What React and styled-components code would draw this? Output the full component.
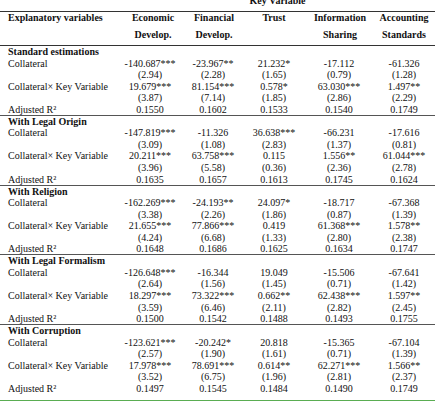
import React from "react";
import styled, { createGlobalStyle } from "styled-components";

const Global = createGlobalStyle`
  html, body { margin: 0; padding: 0; background: #fff; overflow: hidden; }
  body { font-family: "Liberation Serif", "Times New Roman", serif; color: #111; }
`;

const Page = styled.div`
  width: 435px;
  margin-top: -5.5px;
  font-size: 10px;
`;

const Row = styled.div`
  display: grid;
  grid-template-columns: 120px 60px 66px 56px 74px 59px;
  height: ${(p) => p.$h}px;
  line-height: 11.5px;
  box-sizing: border-box;
  border-top: ${(p) => (p.$top ? "1px solid #333" : "none")};
  border-bottom: ${(p) => (p.$bottom ? `1px solid ${p.$dark ? "#333" : "#555"}` : "none")};
  font-weight: ${(p) => (p.$bold ? "bold" : "normal")};
  white-space: nowrap;
`;

const Label = styled.div`
  padding-left: 8px;
  text-align: left;
`;

const Cell = styled.div`
  text-align: center;
  padding-left: ${(p) => p.$pl || 0}px;
  padding-right: ${(p) => p.$pr || 0}px;
`;

const Spanning = styled.div`
  grid-column: ${(p) => p.$from} / -1;
  text-align: ${(p) => (p.$center ? "center" : "left")};
  padding-left: ${(p) => (p.$center ? 0 : 8)}px;
`;

const GreenRule = styled.div`
  margin-top: 5.5px;
  height: 2px;
  background: #5aad52;
`;

const sections = [
  {
    title: "Standard estimations",
    rows: [
      ["-140.687***", "-23.967**", "21.232*", "-17.112", "-61.326"],
      ["(2.94)", "(2.28)", "(1.65)", "(0.79)", "(1.28)"],
      ["19.679***", "81.154***", "0.578*", "63.030***", "1.497**"],
      ["(3.87)", "(7.14)", "(1.85)", "(2.86)", "(2.29)"],
      ["0.1550", "0.1602", "0.1533", "0.1540", "0.1749"],
    ],
  },
  {
    title: "With Legal Origin",
    rows: [
      ["-147.819***", "-11.326", "36.638***", "-66.231", "-17.616"],
      ["(3.09)", "(1.08)", "(2.83)", "(1.37)", "(0.81)"],
      ["20.211***", "63.758***", "0.115", "1.556**", "61.044***"],
      ["(3.96)", "(5.58)", "(0.36)", "(2.36)", "(2.78)"],
      ["0.1635", "0.1657", "0.1613", "0.1745", "0.1624"],
    ],
  },
  {
    title: "With Religion",
    rows: [
      ["-162.269***", "-24.193**", "24.097*", "-18.717", "-67.368"],
      ["(3.38)", "(2.26)", "(1.86)", "(0.87)", "(1.39)"],
      ["21.655***", "77.866***", "0.419", "61.368***", "1.578**"],
      ["(4.24)", "(6.68)", "(1.33)", "(2.80)", "(2.38)"],
      ["0.1648", "0.1686", "0.1625", "0.1634", "0.1747"],
    ],
  },
  {
    title: "With Legal Formalism",
    rows: [
      ["-126.648***", "-16.344", "19.049", "-15.506", "-67.641"],
      ["(2.64)", "(1.56)", "(1.45)", "(0.71)", "(1.42)"],
      ["18.297***", "73.322***", "0.662**", "62.438***", "1.597**"],
      ["(3.59)", "(6.46)", "(2.11)", "(2.82)", "(2.45)"],
      ["0.1500", "0.1542", "0.1488", "0.1493", "0.1755"],
    ],
  },
  {
    title: "With Corruption",
    rows: [
      ["-123.621***", "-20.242*", "20.818", "-15.365", "-67.104"],
      ["(2.57)", "(1.90)", "(1.61)", "(0.71)", "(1.39)"],
      ["17.978***", "78.691***", "0.614**", "62.271***", "1.566**"],
      ["(3.52)", "(6.75)", "(1.96)", "(2.81)", "(2.37)"],
      ["0.1497", "0.1545", "0.1484", "0.1490", "0.1749"],
    ],
  },
];

const labels = ["Collateral", "", "Collateral\u00d7 Key Variable", "", "Adjusted R\u00b2"];

const head1 = ["Economic", "Financial", "Trust", "Information", "Accounting"];
const head2 = ["Develop.", "Develop.", "", "Sharing", "Standards"];
const headPl = [6, 2, 0, 2, 0];

const RH = 11.55;

export default function App() {
  return (
    <Page>
      <Global />
      <Row $h={16.5} $bold>
        <Spanning $from={2} $center>
          Key Variable
        </Spanning>
      </Row>
      <Row $h={17.5} $bold $top>
        <Label>Explanatory variables</Label>
        {head1.map((h, i) => (
          <Cell key={i} $pl={headPl[i]} $pr={i === 4 ? 3 : 0}>
            {h}
          </Cell>
        ))}
      </Row>
      <Row $h={17.5} $bold $bottom $dark>
        <Label />
        {head2.map((h, i) => (
          <Cell key={i} $pl={headPl[i]} $pr={i === 4 ? 3 : 0}>
            {h}
          </Cell>
        ))}
      </Row>
      {sections.map((s, si) => (
        <React.Fragment key={si}>
          <Row $h={RH} $bold>
            <Spanning $from={1}>{s.title}</Spanning>
          </Row>
          {s.rows.map((r, ri) => {
            const rule = ri === 4 && si < sections.length - 1;
            return (
              <Row key={ri} $h={rule ? RH + 0.5 : RH} $bottom={rule}>
                <Label>{labels[ri]}</Label>
                {r.map((v, vi) => (
                  <Cell key={vi} $pr={vi === 4 ? 3 : 0}>
                    {v}
                  </Cell>
                ))}
              </Row>
            );
          })}
        </React.Fragment>
      ))}
      <GreenRule />
    </Page>
  );
}
